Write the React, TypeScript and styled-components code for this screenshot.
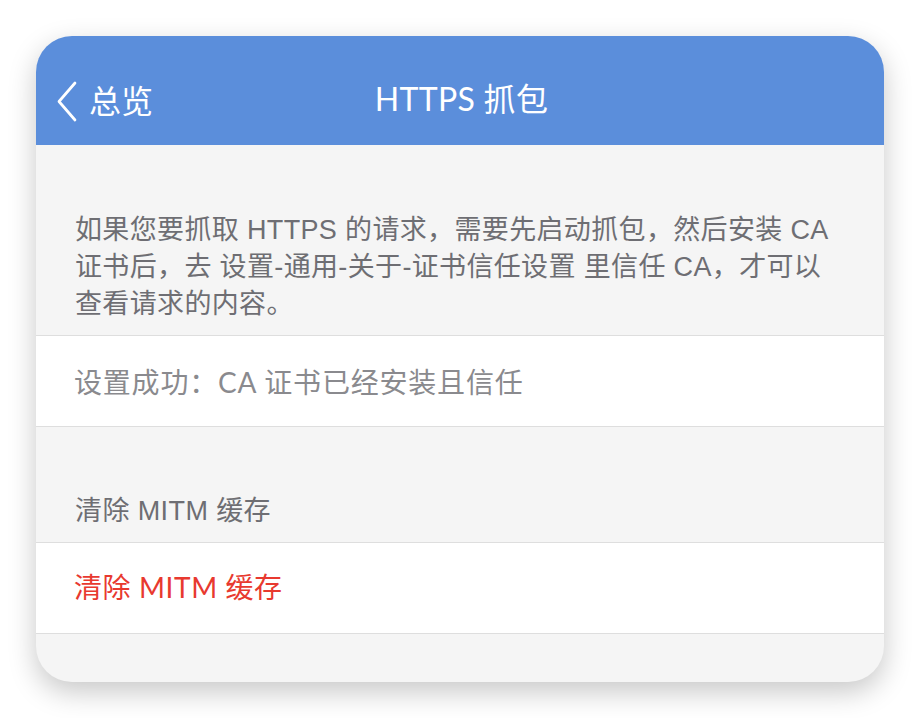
import React from "react";
import styled, { createGlobalStyle } from "styled-components";

const Global = createGlobalStyle`
  html, body { margin: 0; padding: 0; background: #ffffff; }
  body { font-family: "Noto Sans CJK SC", "Noto Sans", sans-serif; }
  * { box-sizing: border-box; }
`;

const Page = styled.div`
  width: 920px;
  height: 718px;
  padding: 36px;
  background: #ffffff;
`;

const Card = styled.div`
  width: 848px;
  height: 646px;
  border-radius: 36px;
  overflow: hidden;
  background: #f5f5f5;
  box-shadow: 0 10px 28px rgba(0, 0, 0, 0.22);
  display: flex;
  flex-direction: column;
`;

const NavBar = styled.header`
  height: 109px;
  flex: none;
  background: #5b8edb;
  display: grid;
  grid-template-columns: 1fr auto 1fr;
  align-items: center;
  padding: 16px 20px 0 21px;
  color: #ffffff;
`;

const Back = styled.div`
  display: flex;
  align-items: center;
  gap: 12px;
  font-family: "Noto Sans CJK SC", sans-serif;
  font-size: 32px;
  font-weight: 400;
  line-height: 1;

  svg {
    flex: none;
    margin-top: 6px;
  }
`;

const Title = styled.h1`
  margin: 0;
  font-family: "Lato", "Noto Sans CJK SC", sans-serif;
  font-weight: 400;
  font-size: 32px;
  letter-spacing: 0.3px;
  line-height: 1;
  transform: translateX(1px);
`;

const Intro = styled.p`
  margin: 0;
  padding: 67px 20px 12px 39px;
  font-family: "Liberation Sans", "Noto Sans CJK SC", sans-serif;
  font-size: 27px;
  line-height: 37px;
  letter-spacing: 0.35px;
  color: #6e6e73;
  white-space: nowrap;
`;

const Cell = styled.div<{ $danger?: boolean }>`
  height: 92px;
  flex: none;
  background: #ffffff;
  border-top: 1px solid #dedede;
  border-bottom: 1px solid #dedede;
  display: flex;
  align-items: center;
  padding-left: 38px;
  padding-bottom: ${(p) => (p.$danger ? "4px" : "0")};
  font-family: "Lato", "Noto Sans CJK SC", sans-serif;
  font-size: 28px;
  color: ${(p) => (p.$danger ? "#e8392f" : "#8a8a8e")};
  letter-spacing: ${(p) => (p.$danger ? "0.6px" : "0.8px")};
`;

const SectionHeader = styled.div`
  height: 115px;
  flex: none;
  display: flex;
  align-items: flex-end;
  padding: 0 0 14px 39px;
  font-family: "Liberation Sans", "Noto Sans CJK SC", sans-serif;
  font-size: 27px;
  letter-spacing: 0.4px;
  color: #6e6e73;
`;

const Chevron = () => (
  <svg width="20" height="41" viewBox="0 0 20 41" fill="none">
    <path d="M18 2 L2 20.5 L18 39" stroke="#ffffff" strokeWidth="2.7" strokeLinecap="round" strokeLinejoin="round" />
  </svg>
);

export default function App() {
  return (
    <>
      <Global />
      <Page>
        <Card>
          <NavBar>
            <Back>
              <Chevron />
              <span>总览</span>
            </Back>
            <Title>HTTPS 抓包</Title>
            <span />
          </NavBar>
          <Intro>
            如果您要抓取 HTTPS 的请求，需要先启动抓包，然后安装 CA
            <br />
            证书后，去 设置-通用-关于-证书信任设置 里信任 CA，才可以
            <br />
            查看请求的内容。
          </Intro>
          <Cell>设置成功：CA 证书已经安装且信任</Cell>
          <SectionHeader>清除 MITM 缓存</SectionHeader>
          <Cell $danger>清除 MITM 缓存</Cell>
        </Card>
      </Page>
    </>
  );
}
